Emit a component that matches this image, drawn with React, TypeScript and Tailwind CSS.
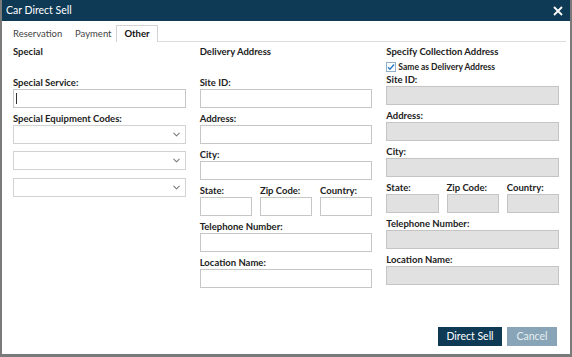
import { FiChevronDown } from "react-icons/fi";

const Label = ({ text, className = "" }: { text: string; className?: string }) => (
  <div className={`h-[12px] text-[9.5px] font-bold leading-[12px] text-[#222] ${className}`}>{text}</div>
);

const Input = ({ disabled = false, className = "" }: { disabled?: boolean; className?: string }) => (
  <div
    className={`h-[19px] border ${
      disabled ? "border-[#c4c4c4] bg-[#e1e1e1]" : "border-[#c6c6c6] bg-white"
    } ${className}`}
  />
);

const Select = ({ className = "" }: { className?: string }) => (
  <div className={`flex h-[19px] items-center justify-end border border-[#d2d2d2] bg-white pr-[3px] ${className}`}>
    <FiChevronDown className="text-[#7a7a7a]" size={11} strokeWidth={2.2} />
  </div>
);

const AddressColumn = ({ disabled = false }: { disabled?: boolean }) => (
  <>
    <Label text="Site ID:" className={disabled ? "mt-[1px]" : "mt-[19px]"} />
    <Input disabled={disabled} />
    <Label text="Address:" className="mt-[5px]" />
    <Input disabled={disabled} />
    <Label text="City:" className="mt-[5px]" />
    <Input disabled={disabled} />
    <div className="mt-[5px] flex gap-[8px]">
      {["State:", "Zip Code:", "Country:"].map((t) => (
        <div key={t} className="flex-1">
          <Label text={t} />
          <Input disabled={disabled} />
        </div>
      ))}
    </div>
    <Label text="Telephone Number:" className="mt-[5px]" />
    <Input disabled={disabled} />
    <Label text="Location Name:" className="mt-[5px]" />
    <Input disabled={disabled} />
  </>
);

export default function App() {
  return (
    <div
      className="flex h-[357px] w-[572px] flex-col border-x-2 border-b-[3px] border-[#7a7a7a] bg-white"
      style={{ fontFamily: "Lato, 'Open Sans', sans-serif" }}
    >
      <div className="flex h-[21px] shrink-0 items-center justify-between bg-[#0e3a56] pl-[4px] pr-[5px] text-white">
        <span className="text-[10.5px]">Car Direct Sell</span>
        <svg width="10" height="10" viewBox="0 0 10 10" className="mr-[2px]">
          <path d="M1 1L9 9M9 1L1 9" stroke="white" strokeWidth="1.8" />
        </svg>
      </div>

      <div className="mt-[4px] flex h-[17px] items-end">
        <div className="flex h-[16px] items-center pl-[11px] text-[9.5px] text-[#444]">
          <span className="w-[62px]">Reservation</span>
          <span className="w-[41px]">Payment</span>
        </div>
        <div className="flex h-[17px] w-[42px] items-center justify-center border-x border-t border-[#d4d4d4] text-[9.5px] font-bold text-[#111]">
          Other
        </div>
        <div className="mr-[4px] h-[1px] flex-1 bg-[#dcdcdc]" />
      </div>

      <div className="mt-[4px] flex gap-[14px] px-[11px]">
        <div className="flex w-[173px] flex-col">
          <Label text="Special" />
          <Label text="Special Service:" className="mt-[19px]" />
          <div className="flex h-[19px] items-center border border-[#c6c6c6] bg-white pl-[2px]">
            <div className="h-[11px] w-[1px] bg-[#333]" />
          </div>
          <Label text="Special Equipment Codes:" className="mt-[5px]" />
          <Select />
          <Select className="mt-[7px]" />
          <Select className="mt-[8px]" />
        </div>

        <div className="flex w-[173px] flex-col">
          <Label text="Delivery Address" />
          <AddressColumn />
        </div>

        <div className="flex w-[173px] flex-col">
          <Label text="Specify Collection Address" />
          <div className="mt-[3px] flex h-[12px] items-center gap-[2px]">
            <div className="flex h-[10px] w-[10px] items-center justify-center border border-[#8fb0c8] bg-white">
              <svg width="8" height="8" viewBox="0 0 8 8">
                <path d="M1 4.2L3 6.2L7 1.5" stroke="#2c7cc4" strokeWidth="1.5" fill="none" />
              </svg>
            </div>
            <span className="text-[8.5px] font-bold text-[#222]">Same as Delivery Address</span>
          </div>
          <AddressColumn disabled />
        </div>
      </div>

      <div className="mt-auto mb-[8px] flex justify-end gap-[5px] pr-[13px]">
        <button className="h-[19px] w-[64px] bg-[#0e3a56] text-[10.5px] text-white">Direct Sell</button>
        <button className="h-[19px] w-[50px] bg-[#87a5b6] text-[10.5px] text-[#e8eef2]">Cancel</button>
      </div>
    </div>
  );
}
